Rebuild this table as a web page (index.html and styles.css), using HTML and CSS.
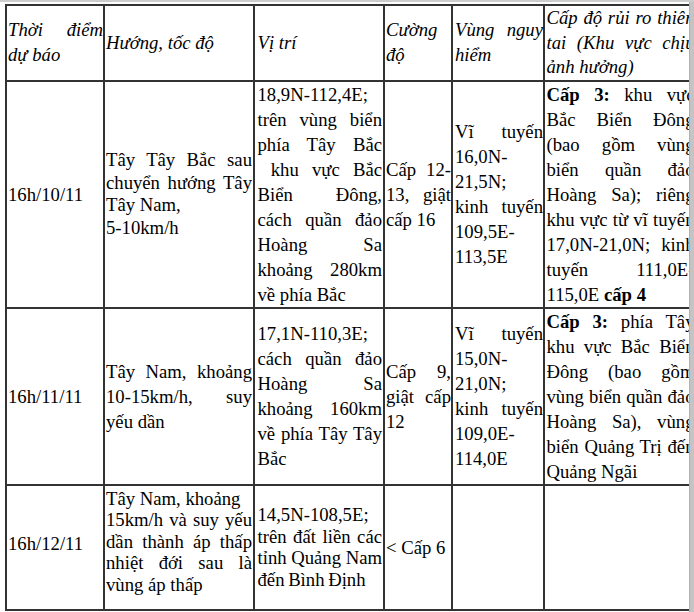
FILE: index.html
```html
<!DOCTYPE html>
<html lang="vi">
<head>
<meta charset="utf-8">
<title>Dự báo bão</title>
<link rel="stylesheet" href="styles.css">
</head>
<body>
<div class="frame">
  <div class="view">
    <table class="fc">
      <thead>
        <tr class="head">
          <th class="c1">Thời điểm dự báo</th>
          <th class="c2">Hướng, tốc độ</th>
          <th class="c3">Vị trí</th>
          <th class="c4">Cường độ</th>
          <th class="c5">Vùng nguy hiểm</th>
          <th class="c6">Cấp độ rủi ro thiên tai (Khu vực chịu ảnh hưởng)</th>
        </tr>
      </thead>
      <tbody>
        <tr class="r1">
          <td class="c1">16h/10/11</td>
          <td class="c2 tight">Tây Tây Bắc sau chuyển hướng Tây Tây Nam,<br>5-10km/h</td>
          <td class="c3">18,9N-112,4E; trên vùng biển phía Tây Bắc &nbsp;khu vực Bắc Biển Đông, cách quần đảo Hoàng Sa khoảng 280km về phía Bắc</td>
          <td class="c4">Cấp 12-<wbr>13, giật cấp 16</td>
          <td class="c5">Vĩ tuyến 16,0N-<wbr>21,5N; kinh tuyến 109,5E-<wbr>113,5E</td>
          <td class="c6"><b>Cấp 3:</b> khu vực Bắc Biển Đông (bao gồm vùng biển quần đảo Hoàng Sa); riêng khu vực từ vĩ tuyến 17,0N-21,0N; kinh tuyến 111,0E-<wbr>115,0E <b>cấp 4</b></td>
        </tr>
        <tr class="r2">
          <td class="c1">16h/11/11</td>
          <td class="c2">Tây Nam, khoảng 10-15km/h, suy yếu dần</td>
          <td class="c3">17,1N-110,3E; cách quần đảo Hoàng Sa khoảng 160km về phía Tây Tây Bắc</td>
          <td class="c4">Cấp 9, giật cấp 12</td>
          <td class="c5">Vĩ tuyến 15,0N-<wbr>21,0N; kinh tuyến 109,0E-<wbr>114,0E</td>
          <td class="c6"><b>Cấp 3:</b> phía Tây khu vực Bắc Biển Đông (bao gồm vùng biển quần đảo Hoàng Sa), vùng biển Quảng Trị đến Quảng Ngãi</td>
        </tr>
        <tr class="r3">
          <td class="c1 lift">16h/12/11</td>
          <td class="c2 topped">Tây Nam, khoảng<br>15km/h và suy yếu dần thành áp thấp nhiệt đới sau là vùng áp thấp</td>
          <td class="c3 narrow">14,5N-108,5E; trên đất liền các tỉnh Quảng Nam đến Bình Định</td>
          <td class="c4">&lt; Cấp 6</td>
          <td class="c5"></td>
          <td class="c6"></td>
        </tr>
      </tbody>
    </table>
  </div>
  <div class="bar"></div>
</div>
</body>
</html>
```

FILE: styles.css
```css
html, body {
  margin: 0;
  padding: 0;
  background: #ffffff;
  overflow: hidden;
}

body {
  font-family: "Liberation Serif", "Times New Roman", serif;
  font-size: 18.7px;
  color: #000000;
}

.frame {
  display: flex;
  height: 612px;
  box-sizing: border-box;
  border-top: 2px solid #cdcdcd;
}

.view {
  flex: 1;
  overflow: hidden;
  padding: 2px 0 0 5px;
}

.bar {
  width: 5px;
  background: #c4c4c4;
  border-left: 1px solid #b0b0b0;
  box-sizing: border-box;
}

.fc {
  box-sizing: border-box;
  border-collapse: separate;
  border-spacing: 0;
  table-layout: fixed;
  width: 692px;
  border-top: 2px solid #333333;
  border-left: 2px solid #333333;
}

.fc th,
.fc td {
  box-sizing: border-box;
  border-right: 2px solid #333333;
  border-bottom: 2px solid #333333;
  vertical-align: middle;
  text-align: justify;
  line-height: 25px;
  font-weight: normal;
}

.fc th {
  font-style: italic;
  line-height: 24.5px;
}

.c1 { width: 98px; padding: 0 0 0 1px; }
.c2 { width: 150px; padding: 0 1px 0 1px; }
.c3 { width: 130px; padding: 0 1px 0 2.5px; }
.c4 { width: 68px; padding: 0 0 0 1px; }
.c5 { width: 92px; padding: 0 0 0 2px; }
.c6 { width: 152px; padding: 0 0.5px 0 1.5px; }

.fc b {
  font-weight: bold;
}

.r1 .tight {
  line-height: 22.5px;
}

.r3 td {
  line-height: 21.5px;
}

.r3 .topped {
  padding-top: 2px;
  padding-bottom: 14px;
}

.r3 .lift {
  padding-bottom: 8px;
}

.r3 .narrow {
  word-spacing: -1px;
}
```
